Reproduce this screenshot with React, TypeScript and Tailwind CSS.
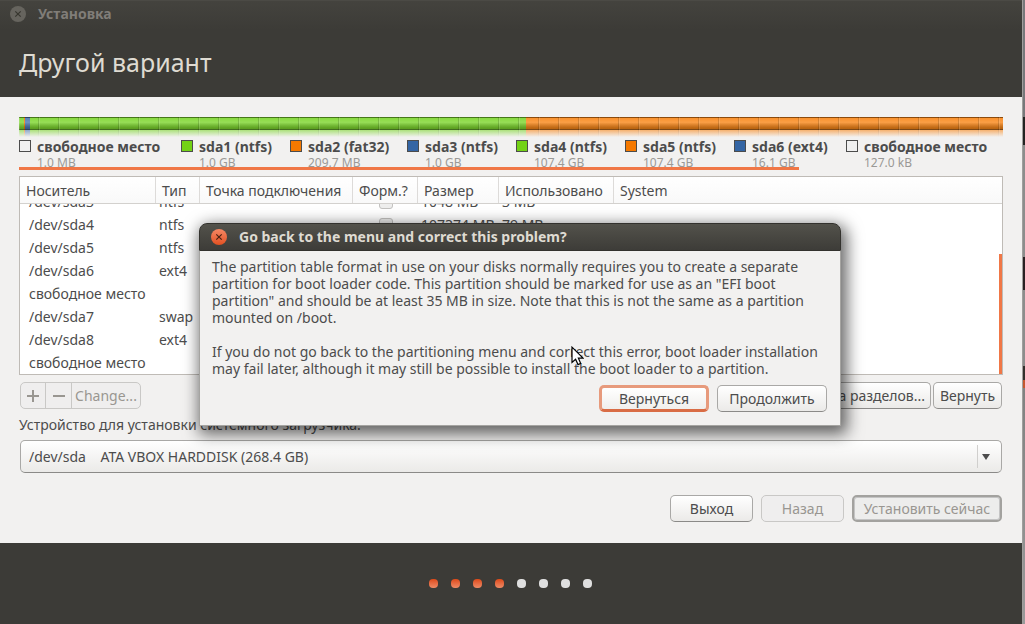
import type { ReactNode } from "react";

const legend = [
  { name: "свободное место", size: "1.0 MB", color: "bg-[#f0f0f0]" },
  { name: "sda1 (ntfs)", size: "1.0 GB", color: "bg-[#73d216]" },
  { name: "sda2 (fat32)", size: "209.7 MB", color: "bg-[#f57900]" },
  { name: "sda3 (ntfs)", size: "1.0 GB", color: "bg-[#3465a4]" },
  { name: "sda4 (ntfs)", size: "107.4 GB", color: "bg-[#73d216]" },
  { name: "sda5 (ntfs)", size: "107.4 GB", color: "bg-[#f57900]" },
  { name: "sda6 (ext4)", size: "16.1 GB", color: "bg-[#3465a4]" },
  { name: "свободное место", size: "127.0 kB", color: "bg-[#f0f0f0]" },
];

const columns = ["Носитель", "Тип", "Точка подключения", "Форм.?", "Размер", "Использовано", "System"];

const rows = [
  { device: "/dev/sda3", type: "ntfs", size: "1048 MB", used: "3 MB" },
  { device: "/dev/sda4", type: "ntfs", size: "107374 MB", used: "79 MB" },
  { device: "/dev/sda5", type: "ntfs", size: "107374 MB", used: "79 MB" },
  { device: "/dev/sda6", type: "ext4", size: "16106 MB", used: "1 MB" },
  { device: "свободное место", type: "", size: "1 MB", used: "" },
  { device: "/dev/sda7", type: "swap", size: "4294 MB", used: "0 MB" },
  { device: "/dev/sda8", type: "ext4", size: "30012 MB", used: "1 MB" },
  { device: "свободное место", type: "", size: "0 MB", used: "" },
];

const rowGrid = "grid grid-cols-[136px_44px_153px_65px_81px_115px_1fr]";

function Button({ children, look = "normal", className = "" }: { children: ReactNode; look?: "normal" | "focus" | "disabled" | "disabledDefault"; className?: string }) {
  const looks = {
    normal: "border border-[#a9a8a6] border-b-[#8b8a88] bg-linear-to-b from-white to-[#ebeae8] text-[#4c4c4c]",
    focus: "border-3 border-[#e79a7c] border-b-[#d96c45] bg-linear-to-b from-white to-[#f0efed] text-[#4c4c4c]",
    disabled: "border border-[#c9c8c6] bg-[#efeeee] text-[#999691]",
    disabledDefault: "border-2 border-[#a3a29f] bg-[#ededec] text-[#999691] shadow-[inset_0_0_0_1px_#c4c4c4]",
  };
  return (
    <button
      type="button"
      disabled={look.startsWith("disabled")}
      className={`flex h-[27px] items-center justify-center rounded-[5px] whitespace-nowrap ${looks[look]} ${className}`}
    >
      {children}
    </button>
  );
}

function CloseIcon() {
  return (
    <svg viewBox="0 0 8 8" className="size-2" fill="none" stroke="currentColor" strokeWidth="1.2">
      <path d="M1.3 1.3 6.7 6.7M6.7 1.3 1.3 6.7" />
    </svg>
  );
}

function PartitionBar() {
  return (
    <div className="relative h-5 overflow-hidden">
      <div className="flex h-full">
        <div className="w-[5px] bg-[#7cd52c]" />
        <div className="w-px bg-[#f57900]" />
        <div className="w-[5px] bg-[#4a76b0]" />
        <div className="w-[496px] bg-[#7cd52c]" />
        <div className="flex-1 bg-[#f98617]" />
      </div>
      <div className="absolute inset-x-0 top-0 h-[13px] border-t border-b border-t-black/25 border-b-black/50 bg-linear-to-b from-white/10 via-white/20 via-40% to-black/25" />
      <div className="absolute inset-0 bg-[repeating-linear-gradient(90deg,rgba(255,255,255,0.14)_0,rgba(255,255,255,0.14)_1px,transparent_1px,transparent_19px,rgba(0,0,0,0.15)_19px,rgba(0,0,0,0.15)_20px)]" />
      <div className="absolute inset-x-0 top-[13px] bottom-0 bg-linear-to-b from-[#f2f1f0]/40 to-[#f2f1f0]" />
    </div>
  );
}

function DeviceTable() {
  return (
    <div className="relative border border-[#bfbbb6] bg-white">
      <table className="flex flex-col">
        <thead className="block">
          <tr className={`${rowGrid} h-[27px] border-b border-[#d3d1ce] bg-linear-to-b from-white to-[#f9f9f9]`}>
            {columns.map((name) => (
              <th key={name} className="flex items-center overflow-hidden border-r border-[#dddbd9] pt-[2px] pl-[6px] font-normal whitespace-nowrap last:border-r-0">
                {name}
              </th>
            ))}
          </tr>
        </thead>
        <tbody className="flex h-[170px] flex-col justify-end overflow-hidden">
          {rows.map((row, i) => (
            <tr key={i} className={`${rowGrid} h-[23px] shrink-0 items-center whitespace-nowrap`}>
              <td className="pl-[9px]">{row.device}</td>
              <td className="pl-[3px]">{row.type}</td>
              <td />
              <td className="flex justify-center">
                <input type="checkbox" disabled aria-label={`Форматировать ${row.device}`} className="size-[14px] appearance-none rounded-[3px] border border-[#c3c2c0] bg-[#eeeeed]" />
              </td>
              <td className="pl-[3px]">{row.size}</td>
              <td className="pl-[3px]">{row.used}</td>
              <td />
            </tr>
          ))}
        </tbody>
      </table>
      <div className="absolute right-0 bottom-0 h-[120px] w-[3px] bg-[#f07746]" />
    </div>
  );
}

function Dialog() {
  return (
    <div role="dialog" aria-labelledby="dialog-title" className="absolute top-[223px] left-[199px] w-[642px] rounded-t-lg bg-[#f2f1f0] shadow-[3px_5px_16px_3px_rgba(0,0,0,0.6)]">
      <div className="flex h-[28px] items-center gap-3 rounded-t-lg border border-[#33322e] bg-linear-to-b from-[#53524b] to-[#3d3c38] pl-[11px]">
        <button type="button" aria-label="Закрыть" className="flex size-4 items-center justify-center rounded-full bg-linear-to-b from-[#f58763] to-[#e2501f] text-[#4a2213]">
          <CloseIcon />
        </button>
        <h2 id="dialog-title" className="text-[14px] font-bold whitespace-nowrap text-[#dfdbd2]">Go back to the menu and correct this problem?</h2>
      </div>
      <div className="border-x border-b border-[#a5a4a1] px-3 pt-[7px] pb-[13px]">
        <p className="leading-[17px] whitespace-nowrap">
          The partition table format in use on your disks normally requires you to create a separate<br />
          partition for boot loader code. This partition should be marked for use as an "EFI boot<br />
          partition" and should be at least 35 MB in size. Note that this is not the same as a partition<br />
          mounted on /boot.
        </p>
        <p className="mt-[17px] leading-[17px] whitespace-nowrap">
          If you do not go back to the partitioning menu and correct this error, boot loader installation<br />
          may fail later, although it may still be possible to install the boot loader to a partition.
        </p>
        <div className="mt-2 mr-[1px] flex justify-end gap-2">
          <Button look="focus" className="w-[110px]">Вернуться</Button>
          <Button className="w-[110px]">Продолжить</Button>
        </div>
      </div>
    </div>
  );
}

function Pointer() {
  return (
    <svg viewBox="0 0 13 20" className="absolute top-[346px] left-[571px] h-5 w-[13px]" fill="#fff" stroke="#000" strokeWidth="1.2" strokeLinejoin="miter">
      <path d="M1 1.2V16.5L4.6 13.3 7 18.6 9.7 17.4 7.4 12.2H12Z" />
    </svg>
  );
}

export default function App() {
  return (
    <div className="relative flex min-h-screen overflow-hidden bg-[#3c3b37] font-['Noto_Sans',sans-serif] text-[14px] leading-5 text-[#4c4c4c]">
      <main className="flex min-w-0 flex-1 flex-col">
        <header className="h-[97px] border-t border-[#4b4a45] bg-linear-to-b from-[#44433e] to-[#3c3b37] to-30%">
          <div className="flex h-[26px] items-center gap-3 pl-[10px]">
            <button type="button" aria-label="Закрыть окно" className="flex size-4 items-center justify-center rounded-full bg-[#66645e] text-[#37362f]">
              <CloseIcon />
            </button>
            <span className="text-[14px] font-bold text-[#807d78]">Установка</span>
          </div>
          <h1 className="mt-4 pl-[19px] text-[25px] leading-[38px] text-[#dfdbd2]">Другой вариант</h1>
        </header>

        <section className="flex flex-col bg-[#f2f1f0] px-[19px] pt-5 pb-[21px]">
          <PartitionBar />
          <ul className="grid h-[30px] grid-cols-[162px_109px_117px_109px_109px_109px_112px_1fr]">
            {legend.map((item, i) => (
              <li key={i} className="flex gap-[6px]">
                <span className={`mt-[3px] size-3 shrink-0 border border-[#4c4c4c] ${item.color}`} />
                <div className="whitespace-nowrap">
                  <div className="font-bold leading-[19px]">{item.name}</div>
                  <div className="text-[12px] leading-[14px] text-[#9a9996]">{item.size}</div>
                </div>
              </li>
            ))}
          </ul>
          <div className="relative h-[3px] w-[780px] bg-[#f07746]" />

          <div className="mt-[6px]">
            <DeviceTable />
          </div>

          <div className="mt-[7px] flex justify-between pr-[1px] pl-[1px]">
            <div className="flex h-[27px] overflow-hidden rounded-[5px] border border-[#c9c8c6] bg-[#efeeee] text-[#999691]">
              <button type="button" disabled aria-label="Добавить" className="flex w-[25px] items-center justify-center border-r border-[#c9c8c6]">
                <svg viewBox="0 0 12 12" className="size-3" stroke="currentColor" strokeWidth="2"><path d="M0 6H12M6 0V12" /></svg>
              </button>
              <button type="button" disabled aria-label="Удалить" className="flex w-[26px] items-center justify-center border-r border-[#c9c8c6]">
                <svg viewBox="0 0 12 12" className="size-3" stroke="currentColor" strokeWidth="2"><path d="M0 6H12" /></svg>
              </button>
              <button type="button" disabled className="w-[68px] whitespace-nowrap">Change...</button>
            </div>
            <div className="flex gap-[2px]">
              <Button className="px-[5px]">Новая таблица разделов...</Button>
              <Button className="w-[69px]">Вернуть</Button>
            </div>
          </div>

          <label htmlFor="boot-device" className="mt-[6px] leading-5">Устройство для установки системного загрузчика:</label>
          <div className="relative mt-[5px] mr-[1px] ml-[1px]">
            <select id="boot-device" className="h-[33px] w-full appearance-none rounded-[5px] border border-[#a9a8a6] border-b-[#8b8a88] bg-linear-to-b from-white to-[#ebeae8] pl-2">
              <option>{"/dev/sda\u00a0\u00a0\u00a0\u00a0ATA VBOX HARDDISK (268.4 GB)"}</option>
            </select>
            <div className="pointer-events-none absolute top-[5px] right-0 flex h-[23px] w-[25px] items-center border-l border-[#d0cfcd] pl-1">
              <svg viewBox="0 0 8 6" className="h-[6px] w-2" fill="#4c4c4c"><path d="M0 0H8L4 6Z" /></svg>
            </div>
          </div>

          <div className="mt-[22px] mr-[1px] flex justify-end gap-2">
            <Button className="w-[83px]">Выход</Button>
            <Button look="disabled" className="w-[83px]">Назад</Button>
            <Button look="disabledDefault" className="w-[150px]">Установить сейчас</Button>
          </div>
        </section>

        <footer className="flex flex-1 justify-center gap-[13px] pt-9 pr-[2px]">
          {[0, 1, 2, 3, 4, 5, 6, 7].map((step) => (
            <span key={step} className={`size-[9px] rounded-[4px] ${step < 4 ? "bg-linear-to-b from-[#dd4814] to-[#ee8a64]" : "bg-[#dfdfdf]"}`} />
          ))}
        </footer>
      </main>

      <aside className="w-[3px] shrink-0 border-l border-[#a09f9d] bg-[linear-gradient(#77787a_0,#77787a_117px,#242422_117px,#242422_145px,#8c8d8c_145px,#8c8d8c_257px,#2a2022_257px,#2a2022_290px,#8c8d8c_290px,#8c8d8c_366px,#33302c_366px,#33302c_380px,#c4572f_380px,#c4572f_388px,#808180_388px,#9a9a9a_100%)]" />

      <Dialog />
      <Pointer />
    </div>
  );
}
